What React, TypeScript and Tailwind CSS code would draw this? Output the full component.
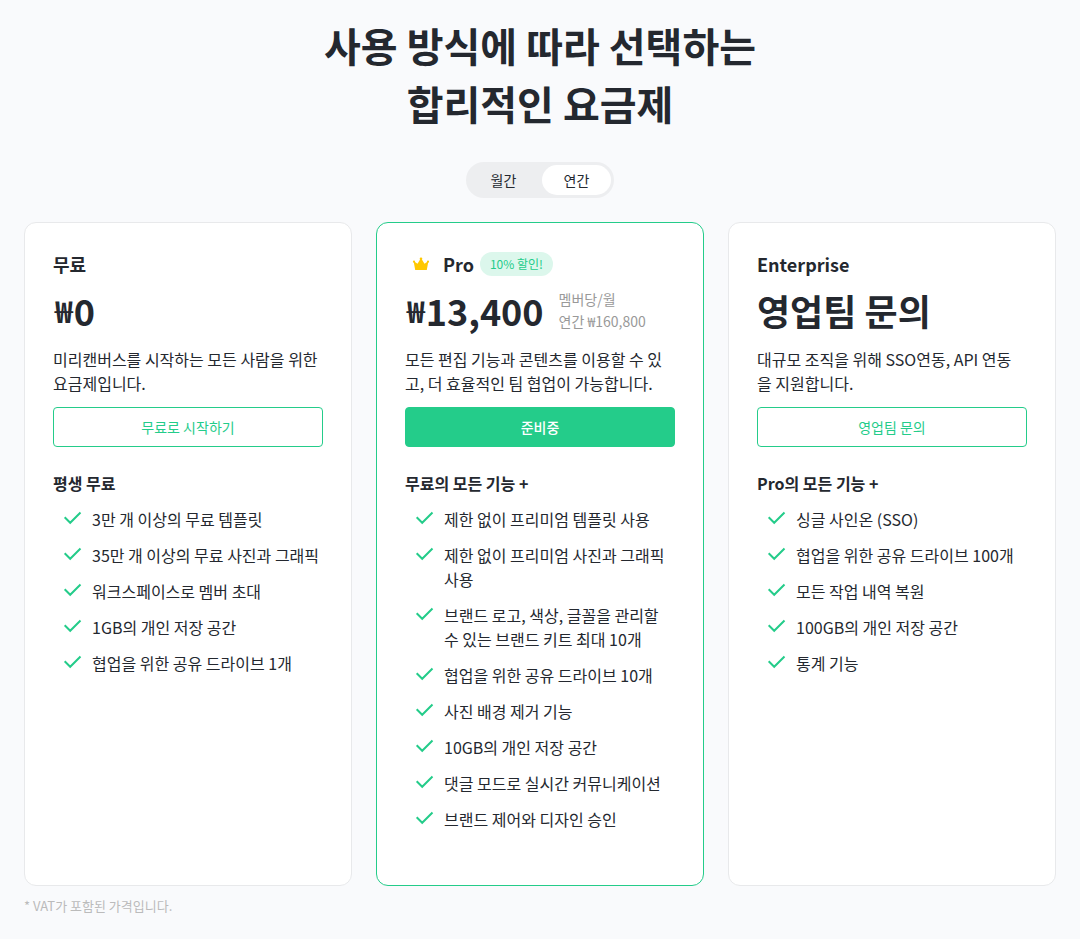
import type { ReactNode } from 'react';

type Plan = {
  name: string;
  badge?: string;
  currency?: string;
  price: string;
  priceNotes?: string[];
  description: string;
  action: string;
  featuresTitle: string;
  features: string[];
  highlighted?: boolean;
};

const plans: Plan[] = [
  {
    name: '무료',
    currency: '₩',
    price: '0',
    description: '미리캔버스를 시작하는 모든 사람을 위한 요금제입니다.',
    action: '무료로 시작하기',
    featuresTitle: '평생 무료',
    features: [
      '3만 개 이상의 무료 템플릿',
      '35만 개 이상의 무료 사진과 그래픽',
      '워크스페이스로 멤버 초대',
      '1GB의 개인 저장 공간',
      '협업을 위한 공유 드라이브 1개',
    ],
  },
  {
    name: 'Pro',
    badge: '10% 할인!',
    currency: '₩',
    price: '13,400',
    priceNotes: ['멤버당/월', '연간 ₩160,800'],
    description: '모든 편집 기능과 콘텐츠를 이용할 수 있고, 더 효율적인 팀 협업이 가능합니다.',
    action: '준비중',
    featuresTitle: '무료의 모든 기능 +',
    features: [
      '제한 없이 프리미엄 템플릿 사용',
      '제한 없이 프리미엄 사진과 그래픽 사용',
      '브랜드 로고, 색상, 글꼴을 관리할 수 있는 브랜드 키트 최대 10개',
      '협업을 위한 공유 드라이브 10개',
      '사진 배경 제거 기능',
      '10GB의 개인 저장 공간',
      '댓글 모드로 실시간 커뮤니케이션',
      '브랜드 제어와 디자인 승인',
    ],
    highlighted: true,
  },
  {
    name: 'Enterprise',
    price: '영업팀 문의',
    description: '대규모 조직을 위해 SSO연동, API 연동\n을 지원합니다.',
    action: '영업팀 문의',
    featuresTitle: 'Pro의 모든 기능 +',
    features: [
      '싱글 사인온 (SSO)',
      '협업을 위한 공유 드라이브 100개',
      '모든 작업 내역 복원',
      '100GB의 개인 저장 공간',
      '통계 기능',
    ],
  },
];

function CheckIcon() {
  return (
    <svg className="w-5 h-5 shrink-0" viewBox="0 0 20 20" fill="none" aria-hidden="true">
      <path d="M1.7 10.3L7.2 15.8L17.5 5.5" stroke="#24cc8a" strokeWidth="2" />
    </svg>
  );
}

function CrownIcon() {
  return (
    <svg className="w-8 h-8 shrink-0" viewBox="0 0 32 32" fill="#ffc800" aria-hidden="true">
      <path d="M10.2 22L8.8 14.2L9.6 13.8L12.5 15.8L15.4 11H16.6L19.5 15.8L22.4 13.8L23.2 14.2L21.8 22Z" />
      <circle cx="9" cy="13.7" r="1.1" />
      <circle cx="16" cy="10.8" r="1.3" />
      <circle cx="23" cy="13.7" r="1.1" />
    </svg>
  );
}

function BillingOption({ value, checked, children }: { value: string; checked?: boolean; children: ReactNode }) {
  return (
    <label className="flex items-center justify-center w-[69px] h-[30px] rounded-full cursor-pointer has-checked:bg-white">
      <input type="radio" name="billing" value={value} defaultChecked={checked} className="appearance-none" />
      {children}
    </label>
  );
}

function PlanCard({ plan }: { plan: Plan }) {
  return (
    <section
      className={`flex-1 min-w-0 px-7 pt-7 pb-[54px] bg-white border rounded-xl ${
        plan.highlighted ? 'border-[#24cc8a]' : 'border-[#e8e9eb]'
      }`}
    >
      <div className="flex items-center h-[26px]">
        {plan.highlighted && (
          <span className="mr-1.5">
            <CrownIcon />
          </span>
        )}
        <h2 className="text-lg font-bold">{plan.name}</h2>
        {plan.badge && (
          <span className="ml-1.5 px-2.5 h-6 leading-6 text-xs rounded-full bg-[#dcf7ec] text-[#24cc8a]">
            {plan.badge}
          </span>
        )}
      </div>

      <div className="flex items-center gap-[15px] h-[54px] mt-1.5">
        <p className="flex items-center text-4xl font-bold whitespace-nowrap">
          {plan.currency && <span className="pl-0.5 pr-px text-3xl">{plan.currency}</span>}
          {plan.price}
        </p>
        {plan.priceNotes && (
          <div className="text-sm leading-[22px] text-[#999] whitespace-nowrap">
            {plan.priceNotes.map((note) => (
              <p key={note}>{note}</p>
            ))}
          </div>
        )}
      </div>

      <p className="mt-2.5 leading-6 whitespace-pre-line">{plan.description}</p>

      <button
        type="button"
        className={`w-full h-10 mt-3 text-sm border border-[#24cc8a] rounded-sm ${
          plan.highlighted ? 'bg-[#24cc8a] text-white font-medium' : 'bg-white text-[#24cc8a]'
        }`}
      >
        {plan.action}
      </button>

      <h3 className="mt-6 leading-6 font-bold">{plan.featuresTitle}</h3>
      <ul className="flex flex-col gap-3 mt-3 pl-2.5">
        {plan.features.map((feature) => (
          <li key={feature} className="flex gap-[9px] leading-6">
            <CheckIcon />
            <span>{feature}</span>
          </li>
        ))}
      </ul>
    </section>
  );
}

export default function App() {
  return (
    <main className="min-h-screen px-6 pt-4 pb-6 bg-[#f9fafc] text-[#24282f] font-['Noto_Sans_CJK_KR',sans-serif]">
      <h1 className="text-center text-[40px] leading-[58px] font-bold">
        사용 방식에 따라 선택하는
        <br />
        합리적인 요금제
      </h1>

      <div
        role="radiogroup"
        aria-label="결제 주기"
        className="flex gap-1 w-fit mx-auto mt-[30px] p-[3px] rounded-full bg-[#edeef0] text-sm"
      >
        <BillingOption value="monthly">월간</BillingOption>
        <BillingOption value="yearly" checked>
          연간
        </BillingOption>
      </div>

      <div className="flex gap-6 mt-6">
        {plans.map((plan) => (
          <PlanCard key={plan.name} plan={plan} />
        ))}
      </div>

      <p className="mt-2.5 text-[13px] leading-5 text-[#bbb]">* VAT가 포함된 가격입니다.</p>
    </main>
  );
}
